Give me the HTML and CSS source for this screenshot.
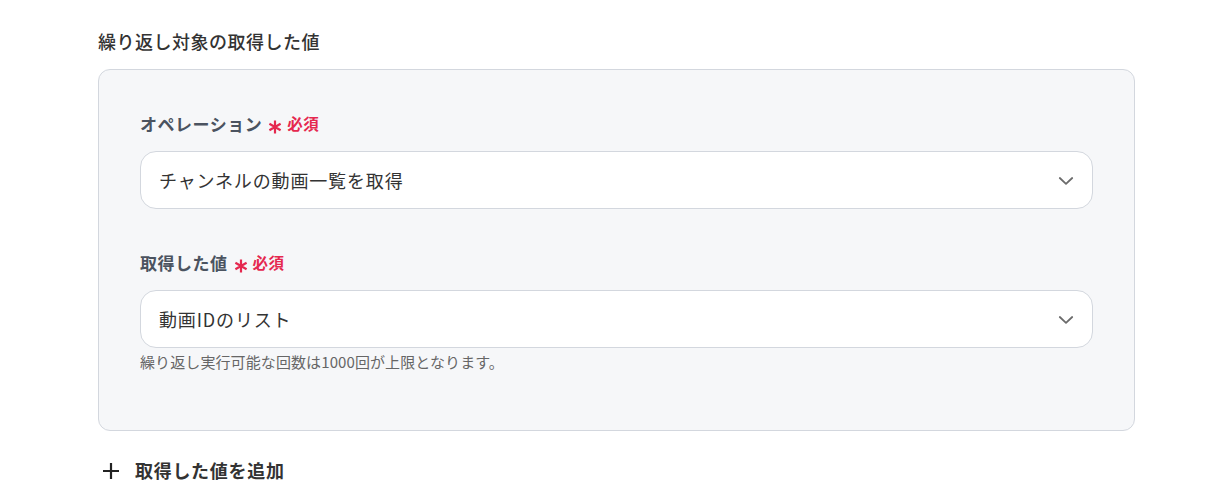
FILE: index.html
```html
<!DOCTYPE html>
<html lang="ja">
<head>
<meta charset="utf-8">
<link rel="stylesheet" href="styles.css">
</head>
<body>
<div class="page">
  <div class="section-title">繰り返し対象の取得した値</div>
  <div class="card">
    <div class="field">
      <div class="label">オペレーション<svg class="ast" width="14" height="14" viewBox="0 0 14 14"><path d="M7 0.5 V13.5 M1.4 3.75 L12.6 10.25 M1.4 10.25 L12.6 3.75" stroke="#e5284f" stroke-width="2.2" fill="none"/></svg><span class="req">必須</span></div>
      <div class="select">
        <span class="value">チャンネルの動画一覧を取得</span>
        <svg class="chev" width="16" height="16" viewBox="0 0 16 16"><path d="M1.8 5 L8 10.8 L14.2 5" fill="none" stroke="#6b6b6b" stroke-width="1.8" stroke-linecap="round" stroke-linejoin="round"/></svg>
      </div>
    </div>
    <div class="field second">
      <div class="label">取得した値<svg class="ast" width="14" height="14" viewBox="0 0 14 14"><path d="M7 0.5 V13.5 M1.4 3.75 L12.6 10.25 M1.4 10.25 L12.6 3.75" stroke="#e5284f" stroke-width="2.2" fill="none"/></svg><span class="req">必須</span></div>
      <div class="select">
        <span class="value">動画IDのリスト</span>
        <svg class="chev" width="16" height="16" viewBox="0 0 16 16"><path d="M1.8 5 L8 10.8 L14.2 5" fill="none" stroke="#6b6b6b" stroke-width="1.8" stroke-linecap="round" stroke-linejoin="round"/></svg>
      </div>
      <div class="help">繰り返し実行可能な回数は1000回が上限となります。</div>
    </div>
  </div>
  <div class="add">
    <svg class="plus" width="18" height="18" viewBox="0 0 18 18"><path d="M9 1 V17 M1 9 H17" stroke="#222" stroke-width="2.2" fill="none"/></svg>
    <span>取得した値を追加</span>
  </div>
</div>
</body>
</html>
```
FILE: styles.css
```css
* { box-sizing: border-box; }
html, body { margin: 0; padding: 0; background: #fff; }
body {
  font-family: "Noto Sans CJK JP", "Noto Sans", sans-serif;
  color: #333;
}
.page {
  padding: 28px 0 0 98px;
  width: 1135px;
}
.section-title {
  font-size: 18px;
  line-height: 27px;
  font-weight: 500;
  letter-spacing: 0.5px;
  color: #333;
  margin-bottom: 14px;
}
.card {
  background: #f6f7f9;
  border: 1px solid #d3d7de;
  border-radius: 12px;
  padding: 40px 41px 57px 41px;
}
.field.second { margin-top: 40px; }
.label {
  display: flex;
  align-items: center;
  font-size: 17px;
  line-height: 27px;
  font-weight: 700;
  letter-spacing: 0.5px;
  color: #4b5360;
  margin-bottom: 14px;
}
.ast {
  display: block;
  margin-left: 6px;
  position: relative;
  top: 3px;
}
.req {
  color: #e5284f;
  font-size: 15.5px;
  font-weight: 700;
  margin-left: 5px;
}
.select {
  height: 58px;
  background: #fff;
  border: 1px solid #d3d7de;
  border-radius: 16px;
  display: flex;
  align-items: center;
  justify-content: space-between;
  padding: 0 18px 0 18px;
}
.value {
  font-size: 18px;
  letter-spacing: 0.85px;
  color: #333;
}
.chev { display: block; margin-top: 1px; }
.help {
  margin-top: 3px;
  font-size: 15px;
  line-height: 22px;
  letter-spacing: 0.1px;
  color: #666;
}
.add {
  margin-top: 26px;
  display: flex;
  align-items: center;
  font-size: 18px;
  line-height: 27px;
  font-weight: 700;
  letter-spacing: 0.7px;
  color: #333;
  padding-left: 4px;
}
.plus { margin-right: 15px; }
```
